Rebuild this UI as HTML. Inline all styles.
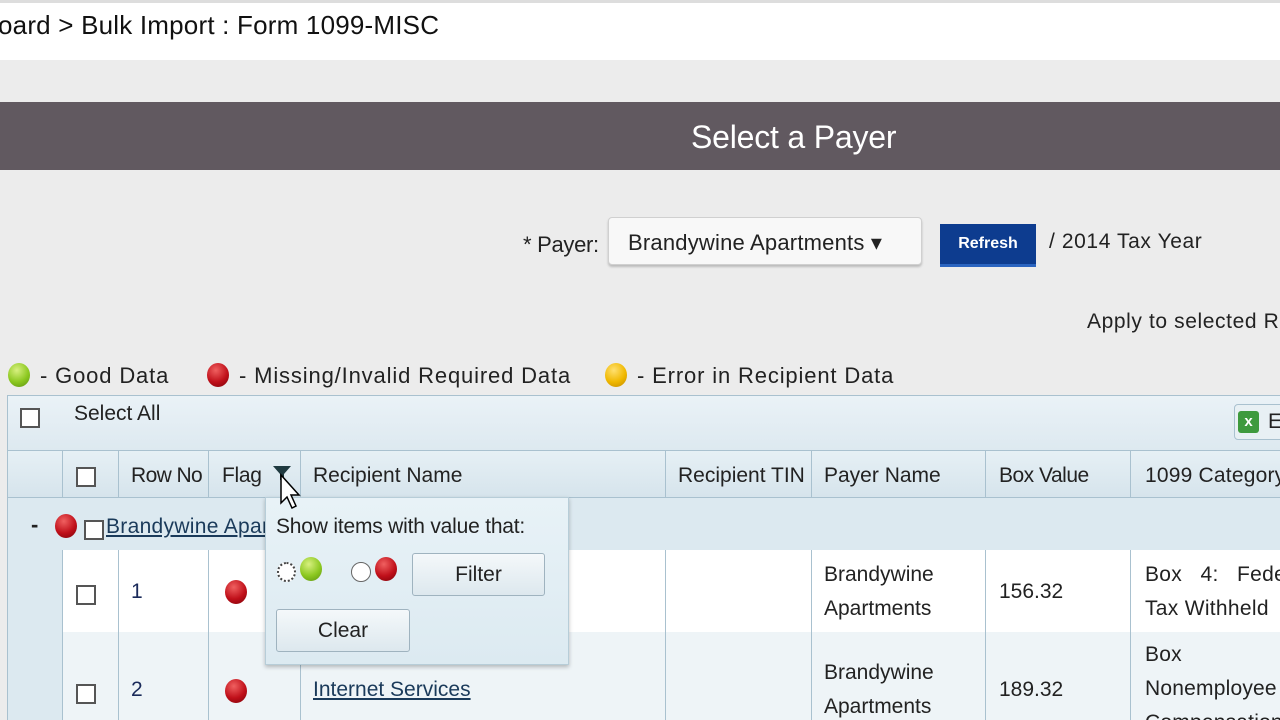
<!DOCTYPE html>
<html style="width:1280px;height:720px;overflow:hidden"><head><meta charset="utf-8"><style>
*{margin:0;padding:0;box-sizing:border-box}
body{width:1280px;height:720px;overflow:hidden;background:#ececec;font-family:"Liberation Sans",Arial,sans-serif;color:#222;position:relative}
.a{position:absolute;white-space:nowrap}
.dot{position:absolute;width:22px;height:24px;border-radius:50%}
.red{background:radial-gradient(circle at 40% 30%,#f06060,#c0101a 55%,#7a0008)}
.grn{background:radial-gradient(circle at 40% 30%,#d8f080,#8cc820 55%,#5a9010)}
.yel{background:radial-gradient(circle at 40% 30%,#ffe070,#f0b800 55%,#c08800)}
.cb{position:absolute;width:20px;height:20px;border:2px solid #555;background:#fff}
.vl{position:absolute;width:1px;background:#a9c1cf}
.t{font-size:21px;letter-spacing:0}
.lg{font-size:22px;letter-spacing:0.85px}
.btn{position:absolute;border:1px solid #9fb3bf;border-radius:3px;background:linear-gradient(#f4f8fa,#dde8ee);font-size:21px;text-align:center;color:#222}
</style></head><body>
<div class="a" style="left:0;top:0;width:1280px;height:60px;background:#fff;border-top:3px solid #ddd"></div>
<div class="a" style="left:-2px;top:10px;font-size:26px;letter-spacing:0.2px;color:#111">oard &gt; Bulk Import : Form 1099-MISC</div>
<div class="a" style="left:0;top:102px;width:1280px;height:68px;background:#615960"></div>
<div class="a" style="left:691px;top:119px;font-size:32px;letter-spacing:-0.2px;color:#fff">Select a Payer</div>

<div class="a t" style="left:523px;top:232px;font-size:22px;letter-spacing:-0.3px">* Payer:</div>
<div class="a" style="left:608px;top:217px;width:314px;height:48px;background:#f8f8f8;border:1px solid #d0d0d0;border-radius:4px;box-shadow:0 2px 2px #bbb"></div>
<div class="a" style="left:628px;top:230px;font-size:22px;letter-spacing:0.2px">Brandywine Apartments ▾</div>
<div class="a" style="left:940px;top:224px;width:96px;height:43px;background:#0d3c8f;border-bottom:3px solid #2a64c0;color:#fff;font-size:16px;font-weight:bold;text-align:center;line-height:40px">Refresh</div>
<div class="a t" style="left:1049px;top:230px;font-size:21px;letter-spacing:0.6px">/ 2014 Tax Year</div>
<div class="a t" style="left:1087px;top:310px;letter-spacing:0.6px">Apply to selected R</div>

<div class="dot grn" style="left:8px;top:363px"></div><div class="a lg" style="left:40px;top:363px">- Good Data</div>
<div class="dot red" style="left:207px;top:363px"></div><div class="a lg" style="left:239px;top:363px">- Missing/Invalid Required Data</div>
<div class="dot yel" style="left:605px;top:363px"></div><div class="a lg" style="left:637px;top:363px">- Error in Recipient Data</div>

<div class="a" style="left:7px;top:395px;width:1273px;height:325px;background:#dce9f0;border-left:1px solid #a9c1cf;border-top:1px solid #a9c1cf"></div>
<div class="a" style="left:8px;top:396px;width:1272px;height:54px;background:linear-gradient(#eaf2f7,#dde9f0)"></div>
<div class="cb" style="left:20px;top:408px"></div>
<div class="a t" style="left:74px;top:402px">Select All</div>
<div class="a" style="left:1234px;top:404px;width:60px;height:36px;border:1px solid #a9c1cf;border-radius:4px;background:#e8f0f4"></div>
<div class="a" style="left:1238px;top:411px;width:21px;height:22px;background:#3e9a3e;border-radius:3px;color:#fff;font-size:15px;font-weight:bold;text-align:center;line-height:22px">x</div>
<div class="a t" style="left:1268px;top:410px">E</div>

<div class="a" style="left:8px;top:450px;width:1272px;height:48px;background:linear-gradient(#e6f0f5,#d6e4ec);border-top:1px solid #a9c1cf;border-bottom:1px solid #a9c1cf"></div>
<div class="a" style="left:62px;top:550px;width:1218px;height:82px;background:#fff"></div>
<div class="a" style="left:62px;top:632px;width:1218px;height:88px;background:#eef4f7"></div>
<div class="vl" style="left:62px;top:450px;height:48px"></div>
<div class="vl" style="left:62px;top:550px;height:170px"></div>
<div class="vl" style="left:118px;top:450px;height:48px"></div><div class="vl" style="left:118px;top:550px;height:170px"></div>
<div class="vl" style="left:208px;top:450px;height:48px"></div><div class="vl" style="left:208px;top:550px;height:170px"></div>
<div class="vl" style="left:300px;top:450px;height:48px"></div><div class="vl" style="left:300px;top:550px;height:170px"></div>
<div class="vl" style="left:665px;top:450px;height:48px"></div><div class="vl" style="left:665px;top:550px;height:170px"></div>
<div class="vl" style="left:811px;top:450px;height:48px"></div><div class="vl" style="left:811px;top:550px;height:170px"></div>
<div class="vl" style="left:985px;top:450px;height:48px"></div><div class="vl" style="left:985px;top:550px;height:170px"></div>
<div class="vl" style="left:1130px;top:450px;height:48px"></div><div class="vl" style="left:1130px;top:550px;height:170px"></div>

<div class="cb" style="left:76px;top:467px"></div>
<div class="a t" style="left:131px;top:464px;letter-spacing:-0.6px">Row No</div>
<div class="a t" style="left:222px;top:464px;letter-spacing:-0.3px">Flag</div>
<svg class="a" style="left:272px;top:465px" width="20" height="16"><path d="M1 1H19L12 9V15H8V9Z" fill="#1f3a40"/></svg>
<div class="a t" style="left:313px;top:464px">Recipient Name</div>
<div class="a t" style="left:678px;top:464px">Recipient TIN</div>
<div class="a t" style="left:824px;top:464px">Payer Name</div>
<div class="a t" style="left:999px;top:464px;letter-spacing:-0.5px">Box Value</div>
<div class="a t" style="left:1145px;top:464px;letter-spacing:0.2px">1099 Category</div>

<div class="a" style="left:31px;top:512px;font-size:22px;font-weight:bold">-</div>
<div class="dot red" style="left:55px;top:514px"></div>
<div class="cb" style="left:84px;top:520px"></div>
<div class="a t" style="left:106px;top:515px;text-decoration:underline;color:#1a3a5a;letter-spacing:0.3px">Brandywine Apar</div>

<div class="cb" style="left:76px;top:585px"></div>
<div class="a t" style="left:131px;top:580px;color:#1a2a5a">1</div>
<div class="dot red" style="left:225px;top:580px"></div>
<div class="a t" style="left:824px;top:558px;line-height:34px">Brandywine<br>Apartments</div>
<div class="a t" style="left:999px;top:580px">156.32</div>
<div class="a t" style="left:1145px;top:558px;line-height:34px;letter-spacing:0.3px">Box&nbsp;&nbsp;&nbsp;4:&nbsp;&nbsp;&nbsp;Feder<br>Tax Withheld</div>

<div class="cb" style="left:76px;top:684px"></div>
<div class="a t" style="left:131px;top:678px;color:#1a2a5a">2</div>
<div class="dot red" style="left:225px;top:679px"></div>
<div class="a t" style="left:313px;top:678px;text-decoration:underline;color:#1a3a5a">Internet Services</div>
<div class="a t" style="left:824px;top:656px;line-height:34px">Brandywine<br>Apartments</div>
<div class="a t" style="left:999px;top:678px">189.32</div>
<div class="a t" style="left:1145px;top:638px;line-height:34px;letter-spacing:0.2px">Box<br>Nonemployee<br>Compensation</div>

<div class="a" style="left:265px;top:497px;width:304px;height:168px;background:linear-gradient(#e8f2f7,#dceaf1);border:1px solid #b7cdd8;box-shadow:0 2px 4px rgba(0,0,0,.25)"></div>
<div class="a t" style="left:276px;top:515px;letter-spacing:-0.2px">Show items with value that:</div>
<div class="a" style="left:277px;top:562px;width:19px;height:20px;border:2px dotted #444;border-radius:50%;background:#fff"></div>
<div class="dot grn" style="left:300px;top:557px"></div>
<div class="a" style="left:351px;top:562px;width:20px;height:20px;border:1px solid #666;border-radius:50%;background:#fff"></div>
<div class="dot red" style="left:375px;top:557px"></div>
<div class="btn" style="left:412px;top:553px;width:133px;height:43px;line-height:41px">Filter</div>
<div class="btn" style="left:276px;top:609px;width:134px;height:43px;line-height:41px">Clear</div>
<svg class="a" style="left:279px;top:473px" width="24" height="38"><path d="M2 2V30L8 24L13 35L17 33L12 22H20Z" fill="#fff" stroke="#000" stroke-width="1.5"/></svg>
</body></html>
